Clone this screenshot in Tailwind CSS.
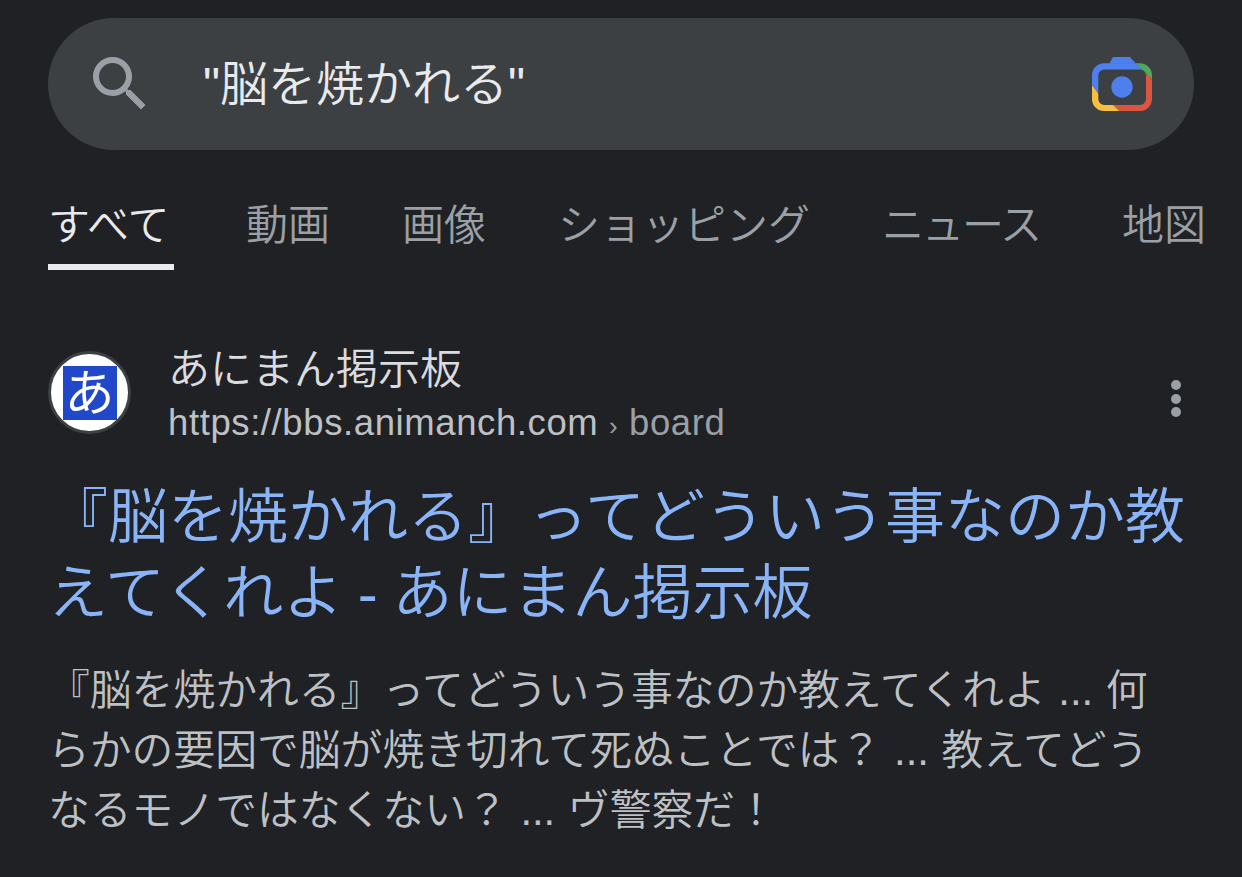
<!DOCTYPE html>
<html lang="ja">
<head>
  <meta charset="UTF-8">
  <title>"脳を焼かれる"</title>
  <meta name="viewport" content="width=device-width, initial-scale=1">
  <script src="https://cdn.jsdelivr.net/npm/@tailwindcss/browser@4"></script>
</head>
<body class="bg-[#202124] h-[877px] overflow-hidden font-[350] font-['Liberation_Sans','Noto_Sans_CJK_JP',sans-serif]">
<header class="pt-[18px]">
  <div class="mx-12 h-[132px] rounded-[66px] bg-[#3c4043] flex items-center pl-[36px] pr-[42px]">
    <svg class="w-[72px] h-[72px] shrink-0" viewBox="0 0 24 24" fill="#9aa0a6">
      <path d="M15.5 14h-.79l-.28-.27A6.47 6.47 0 0 0 16 9.5 6.5 6.5 0 1 0 9.5 16c1.61 0 3.09-.59 4.23-1.57l.27.28v.79l5 4.99L20.49 19l-4.99-5zm-6 0C7.01 14 5 11.99 5 9.5S7.01 5 9.5 5 14 7.01 14 9.5 11.99 14 9.5 14z"/>
    </svg>
    <div class="ml-[47px] pt-[2px] flex-1 text-[#e8eaed] text-[48px] leading-none">"脳を焼かれる"</div>
    <svg class="w-[60px] h-[54px] shrink-0" viewBox="0 0 60 54">
      <clipPath id="lens-ring">
        <path clip-rule="evenodd" d="M12 6.3H48A12 12 0 0 1 60 18.3V42A12 12 0 0 1 48 54H12A12 12 0 0 1 0 42V18.3A12 12 0 0 1 12 6.3ZM12.3 12.6A6 6 0 0 0 6.3 18.6V42A6 6 0 0 0 12.3 48H48A6 6 0 0 0 54 42V18.6A6 6 0 0 0 48 12.6Z"/>
      </clipPath>
      <path d="M17.3 6.8L21 0H38L44 6.8Z" fill="#4d80ec"/>
      <g clip-path="url(#lens-ring)">
        <path d="M0 0H44V6.6L52 14.6L6.3 36.6L0 28.3Z" fill="#4d80ec"/>
        <path d="M44 6.6L44 0H60V22.6Z" fill="#4ea95b"/>
        <path d="M52 14.6L60 22.6V54H27.3L21.3 48.3Z" fill="#db5540"/>
        <path d="M0 28.3L6.3 36.6L21.3 48.3L27.3 54H0Z" fill="#f6bf3f"/>
      </g>
      <circle cx="30" cy="30" r="10.7" fill="#4d80ec"/>
    </svg>
  </div>
  <nav class="mt-[52px] pl-12 flex gap-[72px] text-[42px] leading-[47px] whitespace-nowrap overflow-hidden text-[#9aa0a6]">
    <div class="w-[126px] shrink-0 border-b-[6px] border-[#e8eaed] h-[68px] text-[#e8eaed]">すべて</div>
    <div class="shrink-0">動画</div>
    <div class="shrink-0">画像</div>
    <div class="shrink-0">ショッピング</div>
    <div class="shrink-0 w-[168px] tracking-[-2px]">ニュース</div>
    <div class="shrink-0">地図</div>
  </nav>
</header>

<main class="pt-[71px] pl-12 pr-[40px]">
  <div class="flex items-center">
    <div class="w-[83px] h-[83px] mb-[4px] rounded-full bg-white border-[3px] border-[#3c4043] flex items-center justify-center shrink-0">
      <div class="w-[54px] h-[54px] bg-[#2048c8] text-white text-[50px] font-normal leading-[56px] text-center">あ</div>
    </div>
    <div class="ml-[37px] flex-1 pt-[6px]">
      <div class="text-[#dadce0] text-[42px] leading-[46px]">あにまん掲示板</div>
      <div class="text-[#bdc1c6] text-[36.5px] tracking-[0.6px] leading-[44px] mt-[8px]">https://bbs.animanch.com <span class="text-[#9aa0a6]"><span class="text-[26px]">›</span> board</span></div>
    </div>
    <div class="flex flex-col gap-[3.5px] mr-[21px] mt-[8px]">
      <span class="w-[10px] h-[10px] rounded-full bg-[#9aa0a6]"></span>
      <span class="w-[10px] h-[10px] rounded-full bg-[#9aa0a6]"></span>
      <span class="w-[10px] h-[10px] rounded-full bg-[#9aa0a6]"></span>
    </div>
  </div>
  <h3 class="mt-[32px] text-[#8ab4f8] text-[60px] leading-[76px] [word-spacing:-2px]">『脳を焼かれる』ってどういう事なのか教えてくれよ - あにまん掲示板</h3>
  <p class="mt-[29px] pr-[30px] text-[#bdc1c6] text-[41.8px] leading-[60px] [word-spacing:1px]">『脳を焼かれる』ってどういう事なのか教えてくれよ ... 何らかの要因で脳が焼き切れて死ぬことでは？ ... 教えてどうなるモノではなくない？ ... ヴ警察だ！</p>
</main>
</body>
</html>
